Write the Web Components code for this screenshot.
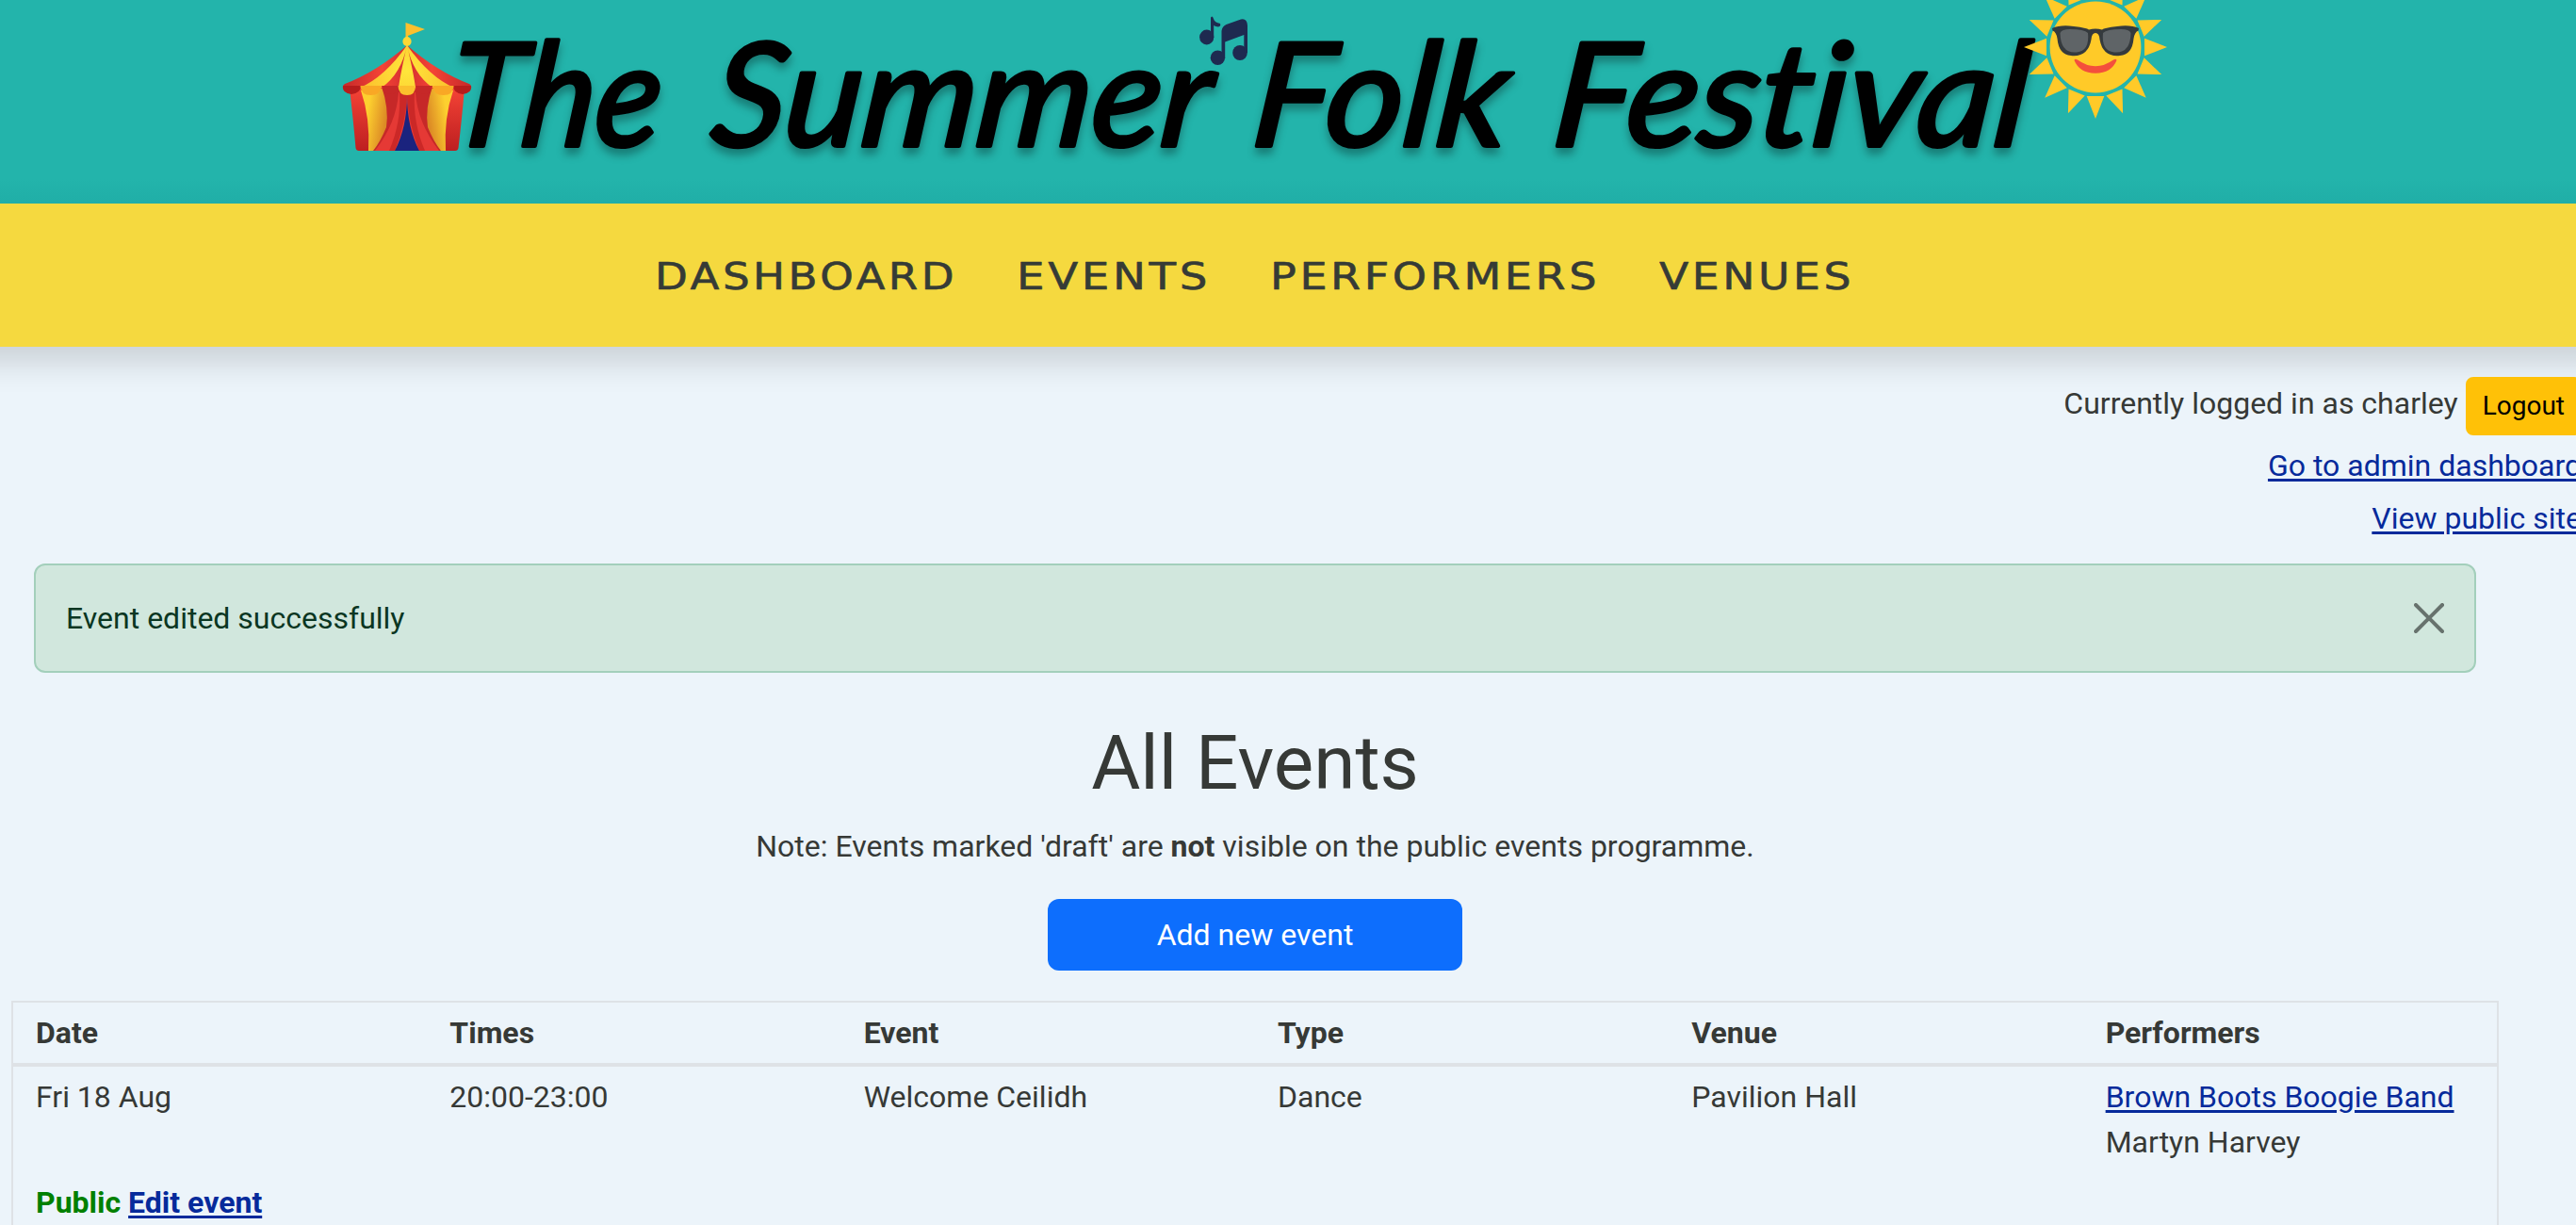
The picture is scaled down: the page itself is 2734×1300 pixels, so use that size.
<!DOCTYPE html>
<html lang="en">
<head>
<meta charset="utf-8">
<title>The Summer Folk Festival</title>
<style>
html,body{margin:0;padding:0}
body{background:#ecf4fa;color:#363936;font:32px/48px Roboto,"Liberation Sans",sans-serif;overflow:hidden;height:1300px}
</style>
</head>
<body>
<festival-page></festival-page>
<script>
const define=(name,html)=>customElements.define(name,class extends HTMLElement{
  constructor(){super();this.attachShadow({mode:'open'}).innerHTML=html;}
});

define('circus-tent',`<style>:host{display:block;width:140px;height:140px}svg{display:block;overflow:visible}</style>
<svg width="140" height="140" viewBox="362 22 140 140">
<defs>
<linearGradient id="r" x1="0" y1="0" x2="0" y2="1"><stop offset="0" stop-color="#f44336"/><stop offset="1" stop-color="#bd1f20"/></linearGradient>
<linearGradient id="rf" gradientUnits="userSpaceOnUse" x1="366" y1="0" x2="498" y2="0"><stop offset="0" stop-color="#c92a2a"/><stop offset=".3" stop-color="#f44336"/><stop offset=".5" stop-color="#d32f2f"/><stop offset=".7" stop-color="#f44336"/><stop offset="1" stop-color="#c92a2a"/></linearGradient>
<radialGradient id="y" gradientUnits="userSpaceOnUse" cx="432" cy="75" r="50"><stop offset="0" stop-color="#ffe63b"/><stop offset="1" stop-color="#fbc02d"/></radialGradient>
<linearGradient id="yl" x1="0" y1="0" x2="1" y2=".4"><stop offset=".35" stop-color="#fdd02f"/><stop offset="1" stop-color="#dc8a25"/></linearGradient>
<linearGradient id="yr" x1="1" y1="0" x2="0" y2=".4"><stop offset=".35" stop-color="#fdd02f"/><stop offset="1" stop-color="#dc8a25"/></linearGradient>
</defs>
<path fill="url(#r)" d="M371 94H493Q490 128 486.500 157Q486 160 483 160H381Q378 160 377.500 157Q375 128 371 94Z"/>
<path fill="#c62828" d="M405 94H459Q450 130 470 160H394Q414 130 405 94Z"/>
<path fill="#e53935" d="M423 98H441Q443 130 466 160H398Q421 130 423 98Z"/>
<path fill="url(#yl)" d="M383 96L405 92Q413 115 410 135Q404 150 396 160H391Q393 125 383 96Z"/>
<path fill="url(#yr)" d="M481 96L459 92Q451 115 454 135Q460 150 468 160H473Q471 125 481 96Z"/>
<path fill="#b71c1c" d="M424 98Q426 130 413 160H419Q431 130 432 101Q433 130 445 160H451Q438 130 440 98Z" opacity=".55"/>
<path fill="#1a237e" d="M432 101Q432 135 419 160H445Q432 135 432 101Z"/>
<path fill="url(#rf)" d="M432 48Q400 76 366 89Q363 91 364 94H500Q501 91 498 89Q464 76 432 48Z"/>
<path fill="url(#y)" d="M432 48Q408 82 382 93H405Q426 78 432 48ZM432 48Q425 78 423 93H441Q439 78 432 48ZM432 48Q456 82 482 93H459Q438 78 432 48Z"/>
<path fill="#b71c1c" d="M364 91H382.500Q383 99 373 100Q363 99 364 91ZM481.500 91H500Q501 99 491 100Q481 99 481.500 91Z"/>
<path fill="#f9a825" d="M382.500 91H405Q404 101 393.500 101Q383 101 382.500 91ZM459 91H481.500Q481 101 470.500 101Q460 101 459 91Z"/>
<path fill="#c62828" d="M405 91H423Q422 100 414 100Q406 100 405 91ZM441 91H459Q458 100 450 100Q442 100 441 91Z"/>
<path fill="#fbc02d" d="M422.500 91H441Q441 101 432 101Q423 101 422.500 91Z"/>
<path fill="#fbc02d" d="M430.500 24L451 31L433 38V45H430.500Z"/><ellipse cx="432" cy="44" rx="4.600" ry="5" fill="#fdd835"/>
</svg>`);

define('music-notes',`<style>:host{display:block;width:54px;height:54px}svg{display:block}</style>
<svg width="54" height="54" viewBox="1272 16 54 54" fill="#1e2a50">
<ellipse cx="1280.700" cy="39.500" rx="7.600" ry="7.900"/><ellipse cx="1292.400" cy="61.300" rx="7.700" ry="7.800"/><ellipse cx="1316" cy="56" rx="7.800" ry="8"/>
<path d="M1285 40V19Q1285 17.500 1286.500 17.500Q1287.500 18 1288 20Q1289 24 1295 25Q1296 28 1293 28.500Q1290 28 1288.200 27V40Z"/>
<path d="M1296.500 62V33Q1297 28 1301.500 26L1317 20.500Q1323.500 19 1324 27V56H1320.300V37L1300.200 44.500V62Z"/></svg>`);

const rays=Array.from({length:16},(_,i)=>`<path d="M52 -9.300L76 0L52 9.300Z" transform="rotate(${i*22.5})"/>`).join('');
define('cool-sun',`<style>:host{display:block;width:152px;height:152px}svg{display:block}</style>
<svg width="152" height="152" viewBox="-76 -76 152 152"><g fill="#ffca28">${rays}<circle r="48.400"/></g>
<path fill="#353a3d" d="M-46 -20Q-37 -24 -23 -22Q-9 -20.500 -7 -18.500Q0 -20.500 7 -18.500Q9 -20.500 23 -22Q37 -24 46 -20L45.500 -17.500Q41.500 -16 40.500 -9Q39 8 26 9Q8 11 4.500 -8Q4 -15 0 -15Q-4 -15 -4.500 -8Q-8 11 -26 9Q-39 8 -40.500 -9Q-41.500 -16 -45.500 -17.500Z"/>
<path fill="#5f6467" d="M-37.500 -15Q-36 -19 -27 -19Q-12 -19 -8 -15Q-6 4 -20 5.500Q-37 7 -37.500 -15ZM37.500 -15Q36 -19 27 -19Q12 -19 8 -15Q6 4 20 5.500Q37 7 37.500 -15Z"/>
<path fill="#f44f3c" d="M-22.500 14Q-22 12 -19 13.500Q0 27 19 13.500Q22 12 22.500 14Q17 27.500 0 27.800Q-17 27.500 -22.500 14Z"/></svg>`);

define('festival-banner',`<style>
:host{display:block;position:relative;height:216px;background:linear-gradient(#23b4ab 190px,#20aea7 216px)}
svg{display:block}
text{font:italic 400 153px Lato,"Open Sans",sans-serif;font-variant-ligatures:none;fill:#000;stroke:#000;stroke-width:4px;stroke-linejoin:round}
.word{filter:drop-shadow(0 7px 4px rgba(0,0,0,.3))}
circus-tent,music-notes,cool-sun{position:absolute}
circus-tent{left:362px;top:22px}music-notes{left:1272px;top:16px}cool-sun{left:2148px;top:-26px}
</style>
<svg width="2734" height="216" role="heading">
<g class="word">
<text transform="translate(472 155) skewX(-6)" textLength="226" lengthAdjust="spacingAndGlyphs">The</text>
<text transform="translate(752 155) skewX(-6)" textLength="530" lengthAdjust="spacingAndGlyphs">Summer</text>
<text transform="translate(1326 155) skewX(-6)" textLength="271" lengthAdjust="spacingAndGlyphs">Folk</text>
<text transform="translate(1645 155) skewX(-6)" textLength="504" lengthAdjust="spacingAndGlyphs">Festival</text>
</g></svg>
<circus-tent></circus-tent><music-notes></music-notes><cool-sun></cool-sun>`);

customElements.define('nav-item',class extends HTMLElement{
  connectedCallback(){
    const w=this.getAttribute('width');
    this.attachShadow({mode:'open'}).innerHTML=`<style>:host{display:block}svg{display:block;overflow:visible}
    text{font:400 39px "DejaVu Sans",sans-serif;fill:#363b36;stroke:#363b36;stroke-width:.6px;stroke-linejoin:round;letter-spacing:3px}</style>
    <svg width="${w}" height="60"><text x="-3" y="44.500" textLength="${+w+8}" lengthAdjust="spacingAndGlyphs">${this.getAttribute('label')}</text></svg>`;
  }
});
define('festival-nav',`<style>:host{display:flex;align-items:center;height:152px;margin:0 -40px;padding:0 0 0 738px;gap:71px;box-sizing:border-box;background:#f5d93f;box-shadow:0 16px 32px rgba(0,0,0,.15)}</style>
<nav-item label="DASHBOARD" width="313"></nav-item><nav-item label="EVENTS" width="198"></nav-item><nav-item label="PERFORMERS" width="342"></nav-item><nav-item label="VENUES" width="199"></nav-item>`);

define('text-link',`<style>:host{display:inline}a{color:#062a9b;text-decoration:underline;text-decoration-thickness:3px;text-underline-offset:3px}</style><a><slot></slot></a>`);

define('user-bar',`<style>:host{display:flex;flex-direction:column;align-items:flex-end;gap:8px;padding-top:32px;margin-right:-6px;white-space:nowrap}
.who{display:flex;gap:8px;height:62px;align-items:flex-start}.who span{margin-top:4px}
button{font:28px/42px Roboto,sans-serif;padding:8px 16px;border:2px solid #ffc107;border-radius:8px;background:#ffc107;color:#000;margin:0}
</style><div class="who"><span>Currently logged in as charley</span><button>Logout</button></div>
<div><text-link>Go to admin dashboard</text-link></div><div><text-link>View public site</text-link></div>`);

define('flash-message',`<style>:host{display:flex;justify-content:space-between;align-items:center;margin:24px 106px 0 36px;padding:32px;border:2px solid #a3cfbb;border-radius:12px;background:#d1e7dd;color:#0a3622}
svg{opacity:.5}</style><slot></slot><svg width="32" height="32" viewBox="0 0 16 16"><path d="M.293.293a1 1 0 0 1 1.414 0L8 6.586 14.293.293a1 1 0 1 1 1.414 1.414L9.414 8l6.293 6.293a1 1 0 0 1-1.414 1.414L8 9.414l-6.293 6.293a1 1 0 0 1-1.414-1.414L6.586 8 .293 1.707a1 1 0 0 1 0-1.414z"/></svg>`);

define('events-intro',`<style>:host{display:flex;flex-direction:column;align-items:center;margin:48px 70px 0 0}
h1{font-size:80px;line-height:96px;font-weight:400;margin:0 0 16px}p{margin:0 0 32px}
b{font-weight:700}button{width:440px;height:76px;border:0;border-radius:12px;background:#0d6efd;color:#fff;font:32px/48px Roboto,sans-serif}</style>
<h1>All Events</h1><p>Note: Events marked 'draft' are <b>not</b> visible on the public events programme.</p><button>Add new event</button>`);

define('event-row',`<style>:host{display:grid;grid-template-columns:repeat(6,1fr)}::slotted(*){padding:8px 0 8px 24px;white-space:nowrap}</style><slot></slot>`);

define('events-table',`<style>:host{display:block;flex:1;margin:32px 82px 0 12px;border:2px solid #dee2e6;border-bottom:0}
.head{font-weight:700;border-bottom:4px solid #dee2e6}
.status{height:48px;padding:8px 24px 0;font-weight:700}.public{color:#008000}</style>
<event-row class="head"><div>Date</div><div>Times</div><div>Event</div><div>Type</div><div>Venue</div><div>Performers</div></event-row>
<event-row><div>Fri 18 Aug</div><div>20:00-23:00</div><div>Welcome Ceilidh</div><div>Dance</div><div>Pavilion Hall</div><div><text-link>Brown Boots Boogie Band</text-link><br>Martyn Harvey</div></event-row>
<div class="status"><span class="public">Public</span> <text-link>Edit event</text-link></div>`);

define('festival-page',`<style>:host{display:flex;flex-direction:column;height:1300px;overflow:hidden}</style><festival-banner></festival-banner><festival-nav></festival-nav><user-bar></user-bar>
<flash-message>Event edited successfully</flash-message><events-intro></events-intro><events-table></events-table>`);
</script>
</body>
</html>
